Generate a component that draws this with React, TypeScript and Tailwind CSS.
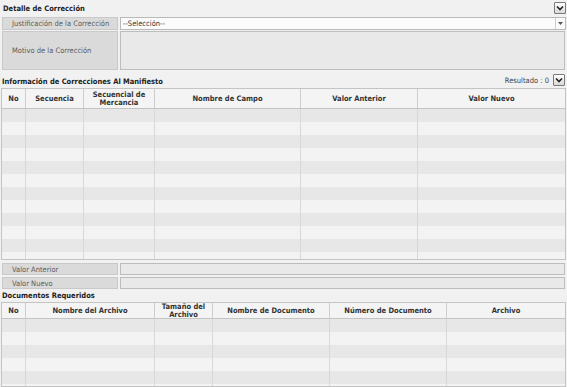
import React from "react";

const font = { fontFamily: "'DejaVu Sans Condensed', 'DejaVu Sans', Tahoma, sans-serif" };

function CollapseBtn() {
  return (
    <div className="w-[12px] h-[12px] border border-[#7a7a7a] bg-gradient-to-b from-[#ffffff] to-[#d9d9d9] flex items-center justify-center rounded-[1px]">
      <svg width="8" height="6" viewBox="0 0 8 6">
        <path d="M1 1.5 L4 4.5 L7 1.5" fill="none" stroke="#222" strokeWidth="1.6" />
      </svg>
    </div>
  );
}

function Label({ children, h }: { children: React.ReactNode; h: string }) {
  return (
    <div className={`w-[116px] ${h} shrink-0 bg-[#dadada] border border-[#c9c9c9] flex items-center pl-[9px] text-[#5a5a5a]`}>
      {children}
    </div>
  );
}

const cols1 = "grid grid-cols-[24px_58px_71px_146px_117px_1fr]";
const cols2 = "grid grid-cols-[24px_129px_58px_117px_117px_1fr]";

function Rows({ n, cols, count }: { n: number; cols: string; count: number }) {
  return (
    <>
      {Array.from({ length: n }).map((_, i) => (
        <div key={i} className={`${cols} h-[13px] shrink-0 ${i % 2 === 0 ? "bg-[#e7e7e7]" : "bg-[#f3f3f3]"}`}>
          {Array.from({ length: count }).map((_, j) => (
            <div key={j} className={j < count - 1 ? "border-r border-[#d8d8d8]" : ""} />
          ))}
        </div>
      ))}
    </>
  );
}

export default function App() {
  const h1 = ["No", "Secuencia", "Secuencial de Mercancia", "Nombre de Campo", "Valor Anterior", "Valor Nuevo"];
  const h2 = ["No", "Nombre del Archivo", "Tamaño del Archivo", "Nombre de Documento", "Número de Documento", "Archivo"];
  return (
    <div style={font} className="w-[567px] h-[387px] overflow-hidden bg-[#f1f1f1] text-[7.5px] leading-[9px] flex flex-col">
      {/* Section 1 header */}
      <div className="h-[16px] flex items-center justify-between pl-[3px] pr-[1px] shrink-0">
        <span className="font-bold text-[#222]">Detalle de Corrección</span>
        <CollapseBtn />
      </div>
      {/* Justificación row */}
      <div className="flex gap-[2px] pl-[2px] pr-[1px] mt-[1px] shrink-0">
        <Label h="h-[13px]">Justificación de la Corrección</Label>
        <div className="flex-1 h-[13px] bg-[#fbfbfb] border border-[#b9b9b9] flex items-center justify-between pl-[2px]">
          <span className="text-[#333]">--Selección--</span>
          <div className="w-[10px] h-full border-l border-[#cfcfcf] flex items-center justify-center">
            <svg width="5" height="3" viewBox="0 0 5 3"><path d="M0 0 L5 0 L2.5 3 Z" fill="#555" /></svg>
          </div>
        </div>
      </div>
      {/* Motivo row */}
      <div className="flex gap-[2px] pl-[2px] pr-[2px] mt-[1px] shrink-0">
        <Label h="h-[39px]">Motivo de la Corrección</Label>
        <div className="flex-1 h-[39px] bg-[#e9e9e9] border border-[#bdbdbd]" />
      </div>
      {/* Section 2 header */}
      <div className="h-[17px] mt-[1px] flex items-end justify-between pl-[2px] pr-[2px] pb-[2px] shrink-0">
        <span className="font-bold text-[#222]">Información de Correcciones Al Manifiesto</span>
        <div className="flex items-center gap-[4px]">
          <span className="text-[#444]">Resultado : 0</span>
          <CollapseBtn />
        </div>
      </div>
      {/* Table 1 */}
      <div className="mx-[1px] h-[172px] border border-[#c4c4c4] flex flex-col overflow-hidden shrink-0 bg-[#f3f3f3]">
        <div className={`${cols1} h-[20px] shrink-0 bg-[#f4f4f4] border-b border-[#c4c4c4]`}>
          {h1.map((t, i) => (
            <div key={i} className={`flex items-center justify-center text-center font-bold text-[#333] leading-[8px] ${i < h1.length - 1 ? "border-r border-[#cdcdcd]" : ""}`}>
              {t === "Secuencial de Mercancia" ? <span>Secuencial de<br />Mercancia</span> : t}
            </div>
          ))}
        </div>
        <Rows n={12} cols={cols1} count={6} />
      </div>
      {/* Valor Anterior / Nuevo */}
      <div className="flex gap-[2px] pl-[2px] pr-[2px] mt-[3px] shrink-0">
        <Label h="h-[12px]">Valor Anterior</Label>
        <div className="flex-1 h-[12px] bg-[#e9e9e9] border border-[#bdbdbd]" />
      </div>
      <div className="flex gap-[2px] pl-[2px] pr-[2px] mt-[2px] shrink-0">
        <Label h="h-[12px]">Valor Nuevo</Label>
        <div className="flex-1 h-[12px] bg-[#e9e9e9] border border-[#bdbdbd]" />
      </div>
      {/* Section 3 header */}
      <div className="h-[13px] flex items-center pl-[2px] shrink-0">
        <span className="font-bold text-[#222]">Documentos Requeridos</span>
      </div>
      {/* Table 2 */}
      <div className="mx-[1px] flex-1 border border-[#c4c4c4] flex flex-col overflow-hidden bg-[#f3f3f3]">
        <div className={`${cols2} h-[16px] shrink-0 bg-[#f4f4f4] border-b border-[#c4c4c4]`}>
          {h2.map((t, i) => (
            <div key={i} className={`flex items-center justify-center text-center font-bold text-[#333] leading-[8px] ${i < h2.length - 1 ? "border-r border-[#cdcdcd]" : ""}`}>
              {t === "Tamaño del Archivo" ? <span>Tamaño del<br />Archivo</span> : t}
            </div>
          ))}
        </div>
        <Rows n={6} cols={cols2} count={6} />
      </div>
    </div>
  );
}
